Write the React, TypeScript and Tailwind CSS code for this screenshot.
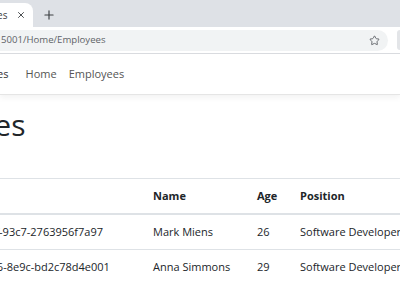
import React from 'react';
import { Plus, X, Star } from 'lucide-react';

const employees = [
  { id: 'c2b3f1c4-7d1e-4a6f-93c7-2763956f7a97', name: 'Mark Miens', age: 26, position: 'Software Developer' },
  { id: '4f2e8a1d-2b6c-4d36-8e9c-bd2c78d4e001', name: 'Anna Simmons', age: 29, position: 'Software Developer' },
];

const App = () => {
  return (
    <div className="w-[400px] h-[284px] overflow-hidden bg-white font-['Open_Sans',sans-serif]">
      {/* Browser tab strip */}
      <div className="h-[27px] bg-[#dee1e6] flex items-end">
        <div className="w-[33px] h-[24px] bg-white rounded-tr-[8px] flex items-center overflow-hidden">
          <span className="ml-[-43px] text-[10px] text-[#3c4043] whitespace-nowrap">Employees</span>
          <X className="ml-[9px] shrink-0 text-[#3c4043]" size={10} strokeWidth={2.2} />
        </div>
        <div className="h-[24px] flex items-center ml-[9px]">
          <Plus className="text-[#3c4043]" size={14} strokeWidth={2} />
        </div>
      </div>

      {/* Address bar */}
      <div className="h-[27px] bg-white border-b border-[#dadce0] flex items-center">
        <div className="w-[388px] h-[21px] bg-[#f1f3f4] rounded-r-full flex items-center justify-between pr-[8px]">
          <span className="ml-[1px] text-[9.6px] text-[#5f6368] whitespace-nowrap">5001/Home/Employees</span>
          <Star className="text-[#5f6368]" size={11} strokeWidth={2} />
        </div>
        <div className="ml-[9px] w-[3px] h-[20px] rounded-l bg-[#e3e5e8]"></div>
      </div>

      {/* Page */}
      <nav className="h-[41px] bg-white border-b border-[#e5e5e5] shadow-[0_3px_6px_rgba(0,0,0,0.05)] flex items-center text-[11px]">
        <span className="ml-[-47px] text-[#333] whitespace-nowrap">Employees</span>
        <a className="ml-[17px] text-[#555]">Home</a>
        <a className="ml-[12px] text-[#555]">Employees</a>
      </nav>

      <h1 className="mt-[12px] ml-[-126px] text-[30px] leading-[36px] font-medium text-[#212529] whitespace-nowrap">Employees</h1>

      <table className="mt-[35px] ml-[-112px] border-collapse text-[11px] text-[#212529] table-fixed w-[555px]">
        <colgroup>
          <col className="w-[255px]" />
          <col className="w-[104px]" />
          <col className="w-[43px]" />
          <col />
        </colgroup>
        <thead>
          <tr className="h-[35px] border-t border-[#dee2e6] border-b-2">
            <th className="px-[10px] text-left font-bold">Id</th>
            <th className="px-[10px] text-left font-bold">Name</th>
            <th className="px-[10px] text-left font-bold">Age</th>
            <th className="px-[10px] text-left font-bold">Position</th>
          </tr>
        </thead>
        <tbody>
          {employees.map((e) => (
            <tr key={e.id} className="h-[36px] border-b border-[#dee2e6]">
              <td className="px-[10px] whitespace-nowrap">{e.id}</td>
              <td className="px-[10px] whitespace-nowrap">{e.name}</td>
              <td className="px-[10px]">{e.age}</td>
              <td className="px-[10px] whitespace-nowrap">{e.position}</td>
            </tr>
          ))}
        </tbody>
      </table>
    </div>
  );
};

export default App;
